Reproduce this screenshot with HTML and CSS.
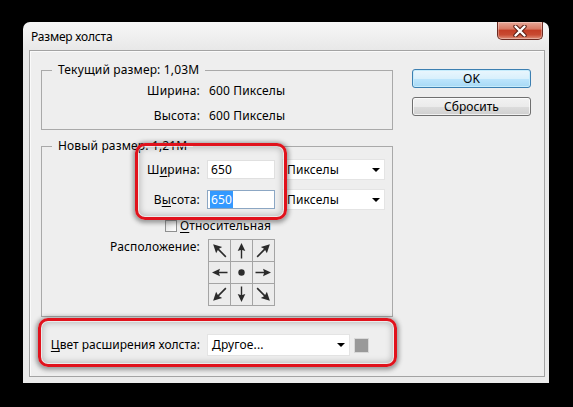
FILE: index.html
```html
<!DOCTYPE html>
<html lang="ru">
<head>
<meta charset="utf-8">
<title>Размер холста</title>
<link rel="stylesheet" href="styles.css">
</head>
<body>
<div class="window">
  <div class="titlebar">
    <span class="title">Размер холста</span>
    <div class="close">
      <svg width="16" height="12" viewBox="0 0 16 12">
        <path d="M3.5 1.5 L12.5 10.5 M12.5 1.5 L3.5 10.5" stroke="#5b2018" stroke-width="4.4" stroke-linecap="round"/>
        <path d="M3.5 1.5 L12.5 10.5 M12.5 1.5 L3.5 10.5" stroke="#fff" stroke-width="2.4" stroke-linecap="round"/>
      </svg>
    </div>
  </div>
  <div class="client">
    <div class="left">
      <fieldset class="group cur">
        <legend>Текущий размер: 1,03M</legend>
        <div class="row"><span class="lbl">Ширина:</span><span class="val">600 Пикселы</span></div>
        <div class="row"><span class="lbl">Высота:</span><span class="val">600 Пикселы</span></div>
      </fieldset>
      <fieldset class="group new">
        <legend>Новый размер: 1,21M</legend>
        <div class="frow">
          <span class="lbl">Ш<u>и</u>рина:</span>
          <div class="input">650</div>
          <div class="select">Пикселы<i class="caret"></i></div>
        </div>
        <div class="frow second">
          <span class="lbl">В<u>ы</u>сота:</span>
          <div class="input focus"><span class="sel">650</span></div>
          <div class="select">Пикселы<i class="caret"></i></div>
        </div>
        <div class="check"><span class="box"></span><span><u>О</u>тносительная</span></div>
        <div class="frow anchor">
          <span class="lbl">Расположение:</span>
          <div class="grid">
            <div><svg width="21" height="21" viewBox="0 0 21 21"><path transform="rotate(-45 10.5 10.5)" d="M10.5 1.5 L14.8 10 L11.3 9 L11.3 19.5 L9.7 19.5 L9.7 9 L6.2 10 Z"/></svg></div>
            <div><svg width="21" height="21" viewBox="0 0 21 21"><path d="M10.5 3 L14.3 11 L11.2 10 L11.2 18.5 L9.8 18.5 L9.8 10 L6.7 11 Z"/></svg></div>
            <div><svg width="21" height="21" viewBox="0 0 21 21"><path transform="rotate(45 10.5 10.5)" d="M10.5 1.5 L14.8 10 L11.3 9 L11.3 19.5 L9.7 19.5 L9.7 9 L6.2 10 Z"/></svg></div>
            <div><svg width="21" height="21" viewBox="0 0 21 21"><path transform="rotate(-90 10.5 10.5)" d="M10.5 3 L14.3 11 L11.2 10 L11.2 18.5 L9.8 18.5 L9.8 10 L6.7 11 Z"/></svg></div>
            <div><svg width="21" height="21" viewBox="0 0 21 21"><circle cx="10.5" cy="10.5" r="3.2"/></svg></div>
            <div><svg width="21" height="21" viewBox="0 0 21 21"><path transform="rotate(90 10.5 10.5)" d="M10.5 3 L14.3 11 L11.2 10 L11.2 18.5 L9.8 18.5 L9.8 10 L6.7 11 Z"/></svg></div>
            <div><svg width="21" height="21" viewBox="0 0 21 21"><path transform="rotate(-135 10.5 10.5)" d="M10.5 1.5 L14.8 10 L11.3 9 L11.3 19.5 L9.7 19.5 L9.7 9 L6.2 10 Z"/></svg></div>
            <div><svg width="21" height="21" viewBox="0 0 21 21"><path transform="rotate(180 10.5 10.5)" d="M10.5 3 L14.3 11 L11.2 10 L11.2 18.5 L9.8 18.5 L9.8 10 L6.7 11 Z"/></svg></div>
            <div><svg width="21" height="21" viewBox="0 0 21 21"><path transform="rotate(135 10.5 10.5)" d="M10.5 1.5 L14.8 10 L11.3 9 L11.3 19.5 L9.7 19.5 L9.7 9 L6.2 10 Z"/></svg></div>
          </div>
        </div>
      </fieldset>
      <div class="frow ext">
        <span class="lbl"><span><u>Ц</u>вет расширения холста:</span></span>
        <div class="select wide">Другое...<i class="caret"></i></div>
        <span class="swatch"></span>
      </div>
    </div>
    <div class="buttons">
      <button class="btn ok">OK</button>
      <button class="btn">Сбросить</button>
    </div>
  </div>
  <div class="hl hl1"></div>
  <div class="hl hl2"></div>
</div>
</body>
</html>
```

FILE: styles.css
```css
html, body {
  height: 100%;
}
body {
  margin: 0;
  background: #000;
  padding: 22px 0 0 23px;
  box-sizing: border-box;
  font: 12px/16px "Noto Sans", "DejaVu Sans", sans-serif;
  letter-spacing: 0.15px;
  color: #000;
}
u {
  text-decoration: underline;
  text-underline-offset: 2px;
}
.window {
  position: relative;
  width: 526px;
  height: 361px;
  box-sizing: border-box;
  padding: 0 4px 6px 6px;
  border-radius: 7px 7px 0 0;
  background: linear-gradient(#f7f7f7, #e8e8e8 28px, #ebebeb);
  display: flex;
  flex-direction: column;
}
.titlebar {
  height: 28px;
  flex: none;
  display: flex;
  justify-content: space-between;
}
.title {
  align-self: center;
  padding-left: 2px;
  margin-top: 2px;
  letter-spacing: -0.2px;
}
.close {
  width: 46px;
  height: 18px;
  box-sizing: border-box;
  margin-right: 2px;
  border: 1px solid #6a2b22;
  border-top: none;
  border-radius: 0 0 5px 5px;
  background: linear-gradient(#e8a898 0%, #d97a64 40%, #c43e26 50%, #c84a31 75%, #df907a 100%);
  box-shadow: inset 0 0 0 1px rgba(255, 255, 255, 0.3);
  display: flex;
  align-items: center;
  justify-content: center;
}
.client {
  flex: 1;
  display: flex;
  gap: 19px;
  border: 1px solid #a3a3a3;
  box-shadow: inset 1px 1px 0 #fafafa;
  background: #eeeeee;
  padding: 11px 0 0 11px;
}
.left {
  width: 352px;
  flex: none;
}
fieldset {
  margin: 0;
  min-width: 0;
  border: 1px solid #a9a9a9;
  padding: 5px 0 5px 10px;
}
legend {
  padding: 0 6px;
  line-height: 16px;
}
.row {
  display: flex;
  height: 16px;
}
.row + .row {
  margin-top: 9px;
}
.lbl {
  width: 148px;
  flex: none;
  text-align: right;
}
.val {
  margin-left: 9px;
}
.new {
  margin-top: 8px;
  padding-bottom: 10px;
}
.frow {
  display: flex;
  align-items: center;
  height: 21px;
}
.frow .lbl {
  margin-right: 7px;
}
.second {
  margin-top: 9px;
}
.input {
  width: 68px;
  height: 19px;
  box-sizing: border-box;
  background: #fff;
  border: 1px solid #e0e0e0;
  padding-left: 3px;
  line-height: 17px;
  margin-right: 7px;
}
.input.focus {
  border-color: #8ca7c4;
  padding-left: 2px;
}
.sel {
  background: #3399ff;
  color: #fff;
  padding: 0 1px;
}
.select {
  width: 103px;
  height: 21px;
  box-sizing: border-box;
  background: #fff;
  border: 1px solid #e4e4e4;
  padding: 0 4px 0 4px;
  display: flex;
  align-items: center;
  justify-content: space-between;
}
.caret {
  width: 0;
  height: 0;
  border-left: 4px solid transparent;
  border-right: 4px solid transparent;
  border-top: 4px solid #000;
}
.check {
  display: flex;
  align-items: center;
  height: 16px;
  margin-top: 8px;
  padding-left: 113px;
}
.box {
  width: 12px;
  height: 12px;
  box-sizing: border-box;
  border: 1px solid #8e8f8f;
  background: linear-gradient(135deg, #dcdcdc, #ffffff);
  margin-right: 3px;
}
.anchor {
  height: auto;
  align-items: flex-start;
  margin-top: 5px;
}
.anchor .lbl {
  margin-right: 8px;
}
.grid {
  display: grid;
  grid-template-columns: repeat(3, 21px);
  grid-auto-rows: 21px;
  gap: 1px;
  padding: 1px;
  background: #a4a4a4;
}
.grid > div {
  background: #ececec;
  display: flex;
  align-items: center;
  justify-content: center;
}
.grid svg {
  fill: #2b2b2b;
}
.ext {
  margin-top: 17px;
  padding-left: 11px;
  height: 22px;
}
.ext .lbl {
  display: flex;
  justify-content: flex-end;
  white-space: nowrap;
  letter-spacing: 0;
}
.select.wide {
  width: 143px;
  height: 22px;
}
.swatch {
  width: 15px;
  height: 15px;
  box-sizing: border-box;
  margin-left: 4px;
  background: #999999;
  border: 1px solid #d8d8d8;
}
.buttons {
  width: 119px;
  display: flex;
  flex-direction: column;
  gap: 9px;
  padding-top: 7px;
}
.btn {
  height: 19px;
  padding: 0;
  font: inherit;
  line-height: 16px;
  color: #000;
  border: 1px solid #707070;
  border-radius: 3px;
  background: linear-gradient(#f2f2f2 0%, #ebebeb 50%, #dddddd 50%, #cfcfcf 100%);
  box-shadow: inset 0 0 0 1px rgba(255, 255, 255, 0.7);
}
.btn.ok {
  border-color: #3c7fb1;
  background: linear-gradient(#eaf6fd 0%, #d9f0fc 50%, #bee6fd 50%, #a7d9f5 100%);
  box-shadow: inset 0 0 0 1px #c6ecfc;
}
.hl {
  position: absolute;
  box-sizing: border-box;
  border: 3px solid #e1121c;
  border-radius: 10px;
  box-shadow: 0 1px 4px 2px rgba(50, 50, 50, 0.45), inset 0 0 0 1px rgba(255, 255, 255, 0.6), inset 0 0 6px 2px rgba(0, 0, 0, 0.22);
}
.hl1 {
  left: 112px;
  top: 121px;
  width: 152px;
  height: 77px;
}
.hl2 {
  left: 15px;
  top: 296px;
  width: 359px;
  height: 49px;
}
```
